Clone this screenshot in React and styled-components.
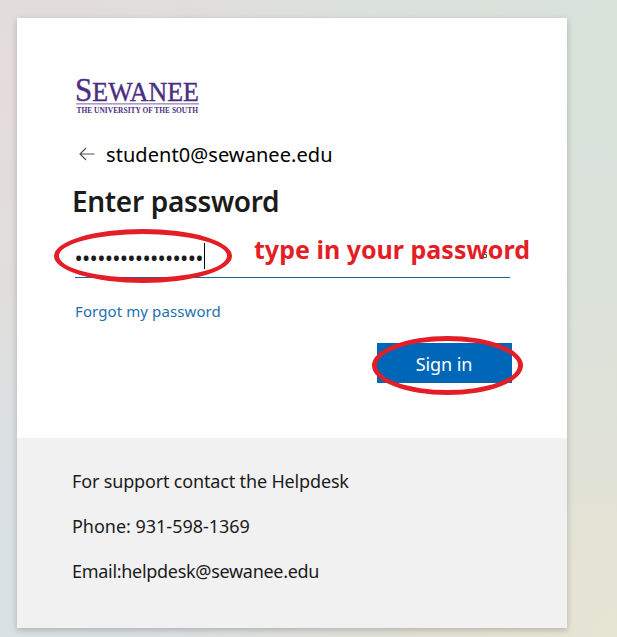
import styled, { createGlobalStyle } from 'styled-components';

const GlobalStyle = createGlobalStyle`
  * {
    box-sizing: border-box;
  }

  body {
    margin: 0;
    font-family: 'Noto Sans', 'Open Sans', sans-serif;
    color: #1b1b1b;
  }
`;

const Page = styled.div`
  height: 637px;
  padding: 18px 50px 9px 17px;
  overflow: hidden;
  background:
    radial-gradient(circle at 0% 15%, #e3dcda 0%, rgba(227, 220, 218, 0) 45%),
    radial-gradient(circle at 100% 12%, #d8e3da 0%, rgba(216, 227, 218, 0) 60%),
    radial-gradient(circle at 0% 90%, #d9e1e5 0%, rgba(217, 225, 229, 0) 50%),
    radial-gradient(circle at 100% 100%, #e6e4d3 0%, rgba(230, 228, 211, 0) 55%),
    #dedfdc;
`;

const Card = styled.main`
  position: relative;
  display: flex;
  flex-direction: column;
  width: 550px;
  height: 610px;
  background: #ffffff;
  box-shadow: 0 2px 6px rgba(0, 0, 0, 0.22);
`;

const Form = styled.form`
  display: flex;
  flex-direction: column;
  height: 420px;
  padding: 53px 55px 0;
`;

const Logo = styled.svg`
  display: block;
  flex: none;
  margin-left: 2px;
  font-family: 'Liberation Serif', serif;
  fill: #4b2e83;
  overflow: visible;
`;

const Identity = styled.div`
  display: flex;
  align-items: center;
  height: 32px;
  margin-top: 19px;
  padding-left: 7px;
  gap: 11px;
  font-size: 20px;
  letter-spacing: 0.06px;
  color: #000000;
`;

const Title = styled.h1`
  height: 40px;
  margin: 11px 0 0;
  font-size: 28px;
  line-height: 40px;
  font-weight: 600;
  letter-spacing: -0.33px;
  white-space: nowrap;
`;

const PasswordField = styled.div`
  display: flex;
  align-items: center;
  width: 435px;
  height: 43px;
  margin: 14px 0 0 3px;
  padding-bottom: 1px;
  border-bottom: 1px solid #1b6296;
`;

const Dots = styled.span`
  width: 129px;
  padding-top: 3px;
  font-size: 22px;
  line-height: 26px;
  letter-spacing: -0.73px;
  text-indent: -0.5px;
  white-space: nowrap;
`;

const Caret = styled.span`
  width: 1px;
  height: 26px;
  background: #000000;
`;

const ForgotLink = styled.a`
  align-self: flex-start;
  margin: 21px 0 0 3px;
  font-size: 15px;
  line-height: 24px;
  letter-spacing: 0.1px;
  color: #1f6fb0;
`;

const SignIn = styled.button`
  align-self: flex-end;
  width: 135px;
  height: 40px;
  margin: 20px 0 0;
  padding: 2px 1px 0 0;
  border: 0;
  background: #0067b8;
  font-family: inherit;
  font-size: 18px;
  letter-spacing: -0.1px;
  color: #ffffff;
`;

const Support = styled.footer`
  flex: 1;
  padding: 31px 55px 0;
  background: #f1f1f1;
  font-size: 18px;
  line-height: 24px;
`;

const SupportLine = styled.p`
  margin: 0 0 21px;
  letter-spacing: ${({ $spacing }) => $spacing}px;
`;

// hand-drawn style notes lying over the form
const Ring = styled.div`
  position: absolute;
  left: ${({ $x }) => $x}px;
  top: ${({ $y }) => $y}px;
  width: ${({ $w }) => $w}px;
  height: ${({ $h }) => $h}px;
  border: 5px solid #e31e26;
  border-radius: 50%;
  pointer-events: none;
`;

const Note = styled.strong`
  position: absolute;
  left: 237px;
  top: 214px;
  font-size: 25px;
  line-height: 34px;
  font-weight: 700;
  letter-spacing: 0.01px;
  white-space: nowrap;
  color: #e31e26;
`;

const RevealMark = styled.svg`
  position: absolute;
  left: 466px;
  top: 234px;
`;

const SewaneeLogo = () => (
  <Logo width="126" height="48" viewBox="0 0 126 48">
    <text x="1" y="30" fontSize="27.5" textLength="124" lengthAdjust="spacingAndGlyphs" stroke="#4b2e83" strokeWidth="0.4">
      <tspan fontSize="33">S</tspan>EWANEE
    </text>
    <rect x="2" y="32.2" width="123" height="1.3" fill="#9585b5" />
    <text x="2.5" y="42.2" fontSize="7.3" fontWeight="700" textLength="121.5" lengthAdjust="spacingAndGlyphs">
      THE UNIVERSITY OF THE SOUTH
    </text>
  </Logo>
);

const BackArrow = () => (
  <svg width="16" height="14" viewBox="0 0 16 14" fill="none" stroke="#505050" strokeWidth="1.2">
    <path d="M15.5 7H1M7 1L1 7l6 6" />
  </svg>
);

const App = () => {
  return (
    <>
      <GlobalStyle />
      <Page>
        <Card>
          <Form>
            <SewaneeLogo />
            <Identity>
              <BackArrow />
              <span>student0@sewanee.edu</span>
            </Identity>
            <Title>Enter password</Title>
            <PasswordField>
              <Dots>{'•'.repeat(17)}</Dots>
              <Caret />
            </PasswordField>
            <ForgotLink>Forgot my password</ForgotLink>
            <SignIn type="button">Sign in</SignIn>
          </Form>

          <Support>
            <SupportLine $spacing={-0.16}>For support contact the Helpdesk</SupportLine>
            <SupportLine $spacing={-0.02}>Phone: 931-598-1369</SupportLine>
            <SupportLine $spacing={-0.3}>Email:helpdesk@sewanee.edu</SupportLine>
          </Support>

          <Ring $x={37} $y={211} $w={178} $h={54} />
          <Ring $x={355} $y={318} $w={151} $h={59} />
          <Note>type in your password</Note>
          <RevealMark width="5" height="6" viewBox="0 0 5 6" fill="#f3e6e6" stroke="#555555">
            <path d="M0.5 2.5h3v3h-3zM1 0.5h3" />
          </RevealMark>
        </Card>
      </Page>
    </>
  );
};

export default App;
